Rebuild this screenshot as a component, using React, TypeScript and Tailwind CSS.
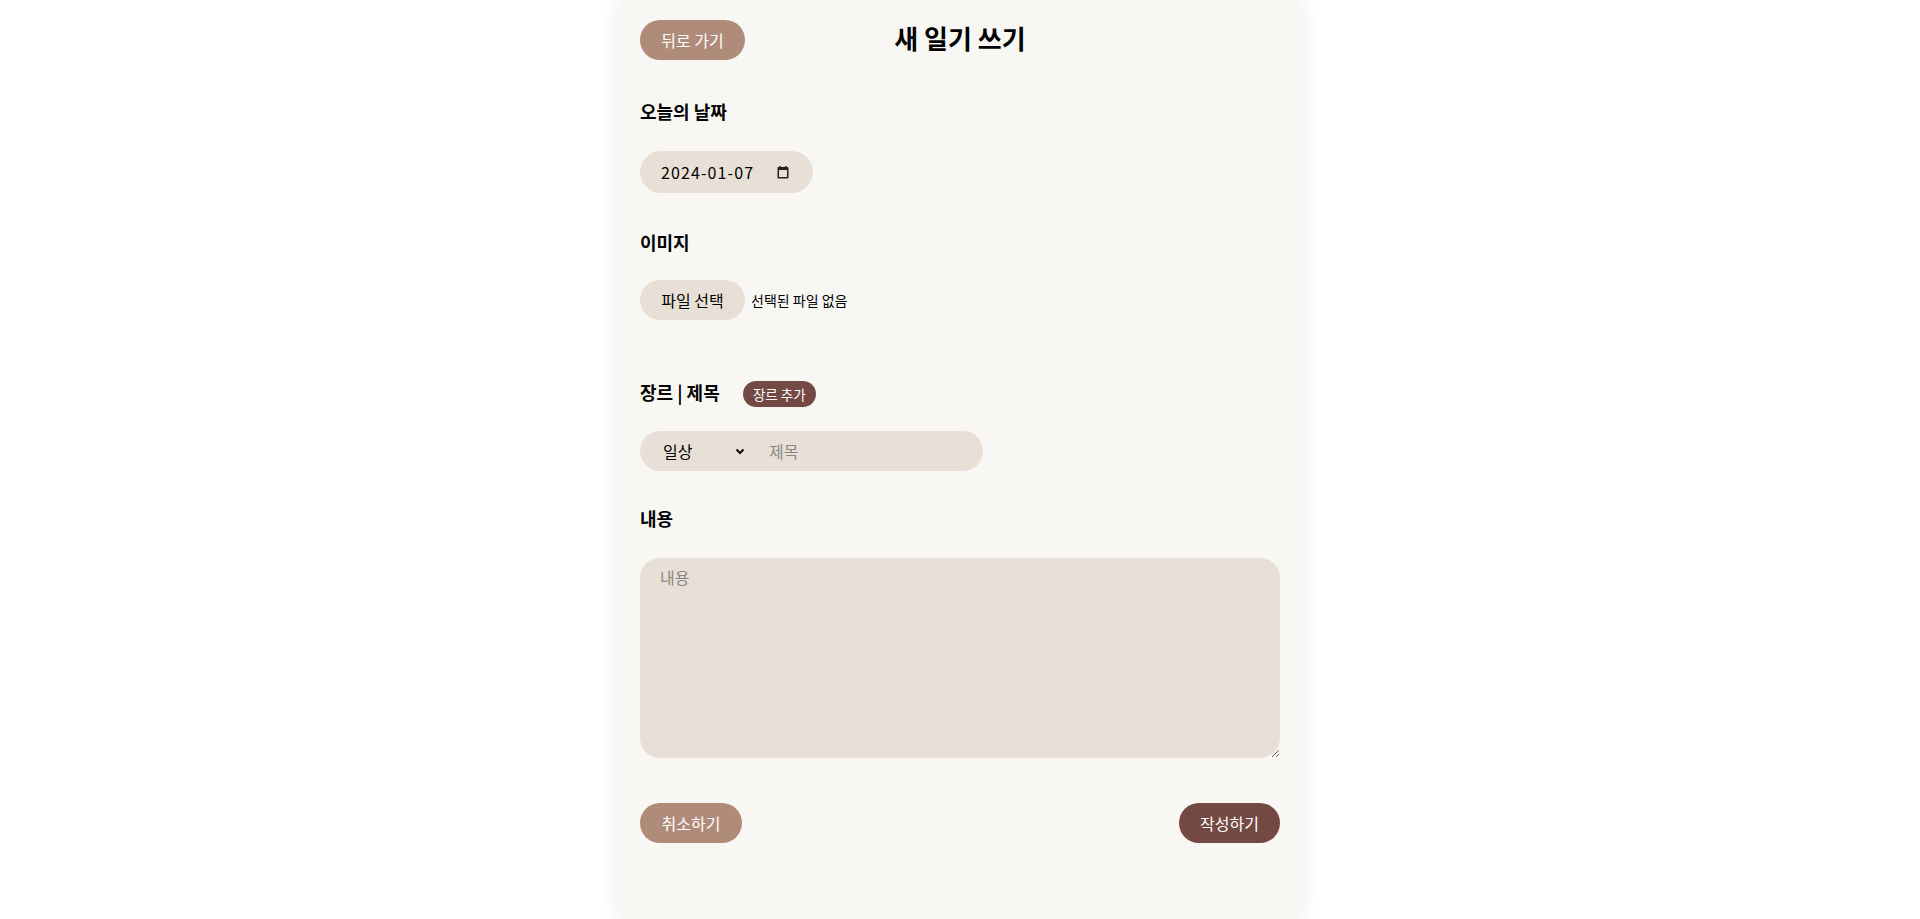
import React from "react";

const font = { fontFamily: '"Noto Sans CJK KR", "Noto Sans", sans-serif' };

export default function App() {
  return (
    <div className="min-h-screen w-full bg-white" style={font}>
      <div className="mx-auto min-h-[919px] w-[680px] bg-[#f9f7f3] px-5 pt-5 pb-10 text-black shadow-[0_0_24px_rgba(0,0,0,0.09)]">
        {/* Header */}
        <div className="relative flex h-10 items-center">
          <button className="flex h-10 w-[105px] items-center justify-center rounded-full bg-[#b18b79] text-[16px] text-white">
            뒤로 가기
          </button>
          <h1 className="absolute left-1/2 -translate-x-1/2 -translate-y-[2px] text-[26px] font-bold leading-10">
            새 일기 쓰기
          </h1>
        </div>

        {/* Date */}
        <div className="mt-[38px] text-[18px] font-bold leading-[26px]">오늘의 날짜</div>
        <div className="mt-[27px] flex h-[42px] w-[173px] items-center justify-between rounded-full bg-[#e8e0d7] pl-[21px] pr-[24px] text-[16px]">
          <span className="tracking-[1.1px]">2024-01-07</span>
          <svg width="12" height="13" viewBox="0 0 12 13" aria-hidden="true">
            <rect x="0.5" y="1" width="11" height="11.5" rx="1" fill="#222" />
            <rect x="2" y="4" width="8" height="7" fill="#e8e0d7" />
            <rect x="2.5" y="0" width="1.5" height="2" fill="#222" />
            <rect x="8" y="0" width="1.5" height="2" fill="#222" />
          </svg>
        </div>

        {/* Image */}
        <div className="mt-[36px] text-[18px] font-bold leading-[26px]">이미지</div>
        <div className="mt-[25px] flex items-center">
          <label className="flex h-10 w-[105px] cursor-pointer items-center justify-center rounded-full bg-[#e8e0d7] text-[16px]">
            파일 선택
            <input type="file" className="hidden" />
          </label>
          <span className="ml-[6px] text-[14px]">선택된 파일 없음</span>
        </div>

        {/* Genre | Title */}
        <div className="mt-[60px] flex h-[28px] items-center">
          <div className="mb-[4px] text-[18px] font-bold leading-[26px]">장르 | 제목</div>
          <button className="ml-[23px] flex h-[26px] w-[73px] items-center justify-center rounded-full bg-[#744944] text-[13.5px] text-white">
            장르 추가
          </button>
        </div>
        <div className="mt-[23px] flex h-10 w-[343px] items-center rounded-full bg-[#e8e0d7] pl-[23px] pr-4">
          <select
            defaultValue="일상"
            className="w-[72px] appearance-none bg-transparent text-[16px] outline-none"
            style={font}
          >
            <option value="일상">일상</option>
          </select>
          <svg width="10" height="7" viewBox="0 0 10 7" aria-hidden="true">
            <path d="M1.5 1.5 L5 5 L8.5 1.5" fill="none" stroke="#111" strokeWidth="2.2" />
          </svg>
          <input
            placeholder="제목"
            className="ml-[24px] min-w-0 flex-1 bg-transparent text-[16px] outline-none placeholder:text-[#8a8580]"
            style={font}
          />
        </div>

        {/* Content */}
        <div className="mt-[34px] text-[18px] font-bold leading-[26px]">내용</div>
        <textarea
          placeholder="내용"
          className="mt-[27px] block h-[200px] w-full rounded-[20px] bg-[#e8e0d7] px-5 py-[8px] text-[16px] leading-[22px] outline-none placeholder:text-[#8a8580]"
          style={font}
        />

        {/* Buttons */}
        <div className="mt-[45px] flex items-center justify-between">
          <button className="flex h-10 w-[102px] items-center justify-center rounded-full bg-[#b18b79] text-[16px] text-white">
            취소하기
          </button>
          <button className="flex h-10 w-[101px] items-center justify-center rounded-full bg-[#744944] text-[16px] text-white">
            작성하기
          </button>
        </div>
      </div>
    </div>
  );
}
